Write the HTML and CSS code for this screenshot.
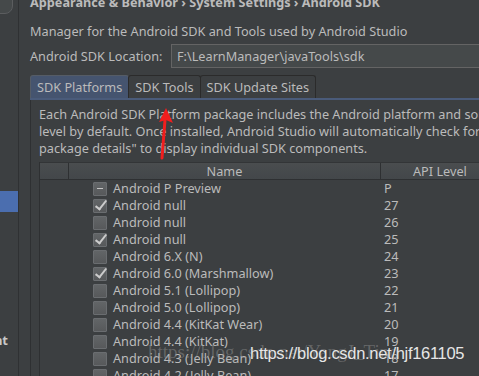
FILE: index.html
```html
<!DOCTYPE html>
<html>
<head>
<meta charset="utf-8">
<link rel="stylesheet" href="styles.css">
</head>
<body>
<div class="app">
  <aside class="side">
    <div class="search"></div>
    <div class="side-sel"></div>
    <div class="side-item"><span>Management</span></div>
  </aside>
  <main class="main">
    <div class="title">Appearance &amp; Behavior › System Settings › Android SDK</div>
    <div class="desc">Manager for the Android SDK and Tools used by Android Studio</div>
    <div class="loc">
      <span class="loc-label">Android SDK Location:</span>
      <div class="field">F:\LearnManager\javaTools\sdk</div>
    </div>
    <div class="tabs">
      <div class="tab active">SDK Platforms</div>
      <div class="tab">SDK Tools</div>
      <div class="tab">SDK Update Sites</div>
    </div>
    <div class="panel">
      <p class="info">Each Android SDK Platform package includes the Android platform and sources pertaining to an API<br>level by default. Once installed, Android Studio will automatically check for updates. Check "show<br>package details" to display individual SDK components.</p>
      <div class="table">
        <div class="thead">
          <div class="th first"></div>
          <div class="th name">Name</div>
          <div class="th api">API Level</div>
        </div>
        <div class="tbody">
          <div class="row"><div class="c0"></div><div class="c1"><span class="cb part"></span>Android P Preview</div><div class="c2">P</div></div>
          <div class="row"><div class="c0"></div><div class="c1"><span class="cb on"></span>Android null</div><div class="c2">27</div></div>
          <div class="row"><div class="c0"></div><div class="c1"><span class="cb"></span>Android null</div><div class="c2">26</div></div>
          <div class="row"><div class="c0"></div><div class="c1"><span class="cb on"></span>Android null</div><div class="c2">25</div></div>
          <div class="row"><div class="c0"></div><div class="c1"><span class="cb"></span>Android 6.X (N)</div><div class="c2">24</div></div>
          <div class="row"><div class="c0"></div><div class="c1"><span class="cb on"></span>Android 6.0 (Marshmallow)</div><div class="c2">23</div></div>
          <div class="row"><div class="c0"></div><div class="c1"><span class="cb"></span>Android 5.1 (Lollipop)</div><div class="c2">22</div></div>
          <div class="row"><div class="c0"></div><div class="c1"><span class="cb"></span>Android 5.0 (Lollipop)</div><div class="c2">21</div></div>
          <div class="row"><div class="c0"></div><div class="c1"><span class="cb"></span>Android 4.4 (KitKat Wear)</div><div class="c2">20</div></div>
          <div class="row"><div class="c0"></div><div class="c1"><span class="cb"></span>Android 4.4 (KitKat)</div><div class="c2">19</div></div>
          <div class="row"><div class="c0"></div><div class="c1"><span class="cb"></span>Android 4.3 (Jelly Bean)</div><div class="c2">18</div></div>
          <div class="row"><div class="c0"></div><div class="c1"><span class="cb"></span>Android 4.2 (Jelly Bean)</div><div class="c2">17</div></div>
        </div>
      </div>
    </div>
  </main>
</div>
<svg class="arrow" width="30" height="60" viewBox="0 0 30 60">
  <path d="M11 52 L14 14" stroke="#f01e1e" stroke-width="3" stroke-linecap="round" fill="none"/>
  <path d="M15 2 L22 17 L15 14 L8 16 Z" fill="#f01e1e"/>
</svg>
<div class="wm-faint">https://blog.csdn.net/YangJ_Tino</div>
<div class="wm">https://blog.csdn.net/hjf161105</div>
</body>
</html>
```
FILE: styles.css
```css
html, body {
  margin: 0;
  padding: 0;
  width: 479px;
  height: 376px;
  overflow: hidden;
  background: #3c3f41;
}
body {
  position: relative;
  font-family: "Noto Sans", "Noto Sans CJK SC", sans-serif;
  font-size: 12.7px;
  color: #bbbbbb;
}
.app {
  display: flex;
  height: 376px;
}
.side {
  width: 18px;
  flex: none;
  border-right: 1px solid #2f3133;
  background: #3c3f41;
  display: flex;
  flex-direction: column;
  overflow: hidden;
}
.search {
  width: 20px;
  height: 20px;
  margin: -8px 0 0 -9px;
  border: 1px solid #5b5d5f;
  border-radius: 8px;
  background: #45494a;
  flex: none;
}
.side-sel {
  margin-top: 177px;
  height: 21px;
  background: #4b6eaf;
  flex: none;
}
.side-item {
  margin-top: 120px;
  height: 16px;
  display: flex;
  justify-content: flex-end;
  overflow: hidden;
  font-weight: bold;
  font-size: 13px;
  line-height: 16px;
  color: #c8c8c8;
}
.side-item span { white-space: nowrap; margin-right: 10px; }
.main {
  flex: 1;
  min-width: 0;
  padding-left: 11px;
  display: flex;
  flex-direction: column;
  overflow: hidden;
}
.title {
  margin-top: -6px;
  height: 17px;
  line-height: 17px;
  font-weight: bold;
  white-space: nowrap;
}
.desc {
  margin-top: 12px;
  line-height: 17px;
  white-space: nowrap;
}
.loc {
  margin-top: 4px;
  display: flex;
  align-items: center;
  white-space: nowrap;
}
.loc-label { width: 141px; flex: none; }
.field {
  flex: 1;
  height: 22px;
  line-height: 22px;
  margin-right: -10px;
  padding-left: 5px;
  border: 1px solid #646464;
  background: #45494a;
  white-space: nowrap;
}
.tabs {
  margin-top: 7px;
  display: flex;
  height: 23px;
  border-bottom: 2px solid #4a5b7a;
}
.tab {
  height: 22px;
  line-height: 22px;
  padding: 0 6px;
  border: 1px solid #2b2b2b;
  border-bottom: none;
  border-radius: 3px 3px 0 0;
  white-space: nowrap;
  margin-right: -1px;
}
.tab.active {
  background: #45546f;
  padding: 0 6px;
  border-color: #555c66;
}
.panel {
  border-left: 1px solid #2e3032;
  padding-left: 8px;
  flex: 1;
  display: flex;
  flex-direction: column;
}
.info {
  margin: 6px 0 0 0;
  line-height: 17px;
  white-space: nowrap;
}
.table {
  margin-top: 5px;
  border-left: 1px solid #2e3032;
  flex: 1;
}
.thead {
  display: grid;
  grid-template-columns: 29px 312px 1fr;
  height: 16px;
  line-height: 16px;
  background: linear-gradient(#4a4d4f, #43474a);
  border-top: 1px solid #333537;
  border-bottom: 1px solid #2e3032;
}
.th.first { border-right: 1px solid #2e3032; }
.th.name { text-align: center; border-right: 1px solid #2e3032; }
.th.api { padding-left: 32px; white-space: nowrap; }
.row {
  display: grid;
  grid-template-columns: 29px 312px 1fr;
  height: 17px;
  line-height: 17px;
  white-space: nowrap;
}
.c1 {
  display: flex;
  align-items: center;
  padding-left: 24px;
  gap: 6px;
}
.c2 { padding-left: 3px; }
.cb {
  width: 12px;
  height: 12px;
  border: 1px solid #6a6d70;
  background: linear-gradient(#626567, #57595b);
  border-radius: 1px;
  position: relative;
  flex: none;
}
.cb.part::after {
  content: "";
  position: absolute;
  left: 3px;
  top: 5px;
  width: 6px;
  height: 1.5px;
  background: #c4c4c4;
}
.cb.on::after {
  content: "";
  position: absolute;
  top: -2px;
  left: 4px;
  width: 4px;
  height: 10px;
  border-right: 2px solid #cccccc;
  border-bottom: 2px solid #cccccc;
  transform: rotate(38deg);
}
.arrow {
  position: absolute;
  left: 151px;
  top: 106px;
}
.wm {
  position: absolute;
  left: 250px;
  top: 344px;
  font-family: "Liberation Sans", Arial, sans-serif;
  font-size: 16.5px;
  color: #e6e6e6;
  letter-spacing: -0.3px;
  white-space: nowrap;
  text-shadow: 0 0 1px #3c3f41;
}
.wm-faint {
  position: absolute;
  left: 148px;
  top: 341px;
  font-family: "Liberation Serif", serif;
  font-size: 19px;
  color: rgba(150, 150, 150, 0.45);
  white-space: nowrap;
}
```
